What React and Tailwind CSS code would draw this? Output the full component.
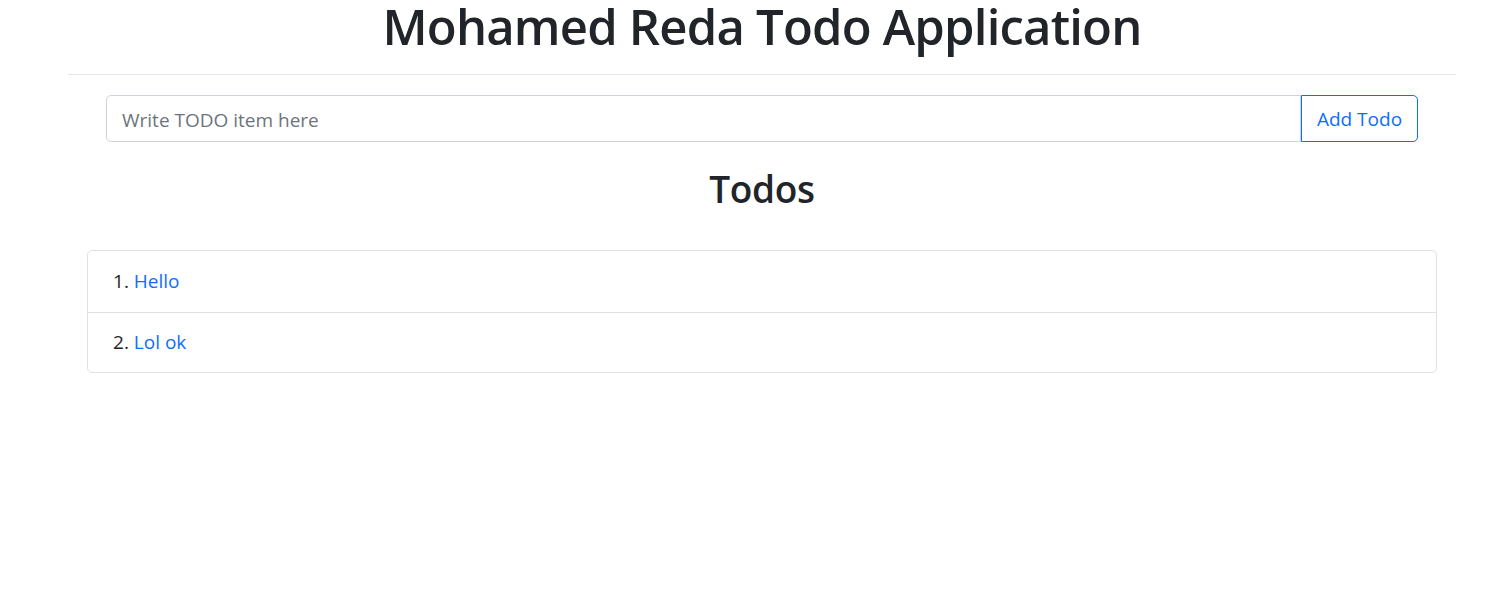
export default function App() {
  const todos = ["Hello", "Lol ok"];
  return (
    <div className="min-h-[598px] bg-white pl-[22px] text-[#212529]" style={{ fontFamily: '"Open Sans", "Noto Sans", sans-serif' }}>
      <div className="flex h-[74px] items-start justify-center">
        <h1 className="text-[49px] font-semibold leading-[52px] tracking-[-0.8px]">Mohamed Reda Todo Application</h1>
      </div>
      <div className="mx-[46px] h-px bg-[#e5e5e5]" />
      <div className="mx-[84px] mt-[20px] flex h-[47px]">
        <input
          type="text"
          placeholder="Write TODO item here"
          className="h-full flex-1 rounded-l-[5px] border border-[#ced4da] px-[15px] pt-[2px] text-[19px] text-[#212529] outline-none placeholder:text-[#6c757d]"
        />
        <button className="h-full w-[117px] rounded-r-[5px] border border-[#0d6efd] pt-[2px] text-[19px] text-[#0d6efd]">Add Todo</button>
      </div>
      <div className="mt-[22px] flex justify-center">
        <h2 className="text-[37px] font-semibold leading-[50px] tracking-[-0.3px]">Todos</h2>
      </div>
      <div className="mx-[65px] mt-[36px] rounded-[5px] border border-[#dee2e6]">
        {todos.map((t, i) => (
          <div key={i} className={`flex items-center pl-[25px] text-[19px] ${i > 0 ? "h-[60px] border-t border-[#dee2e6]" : "h-[61px]"}`}>
            <span>{i + 1}.&nbsp;</span>
            <span className="text-[#0d6efd]">{t}</span>
          </div>
        ))}
      </div>
    </div>
  );
}
